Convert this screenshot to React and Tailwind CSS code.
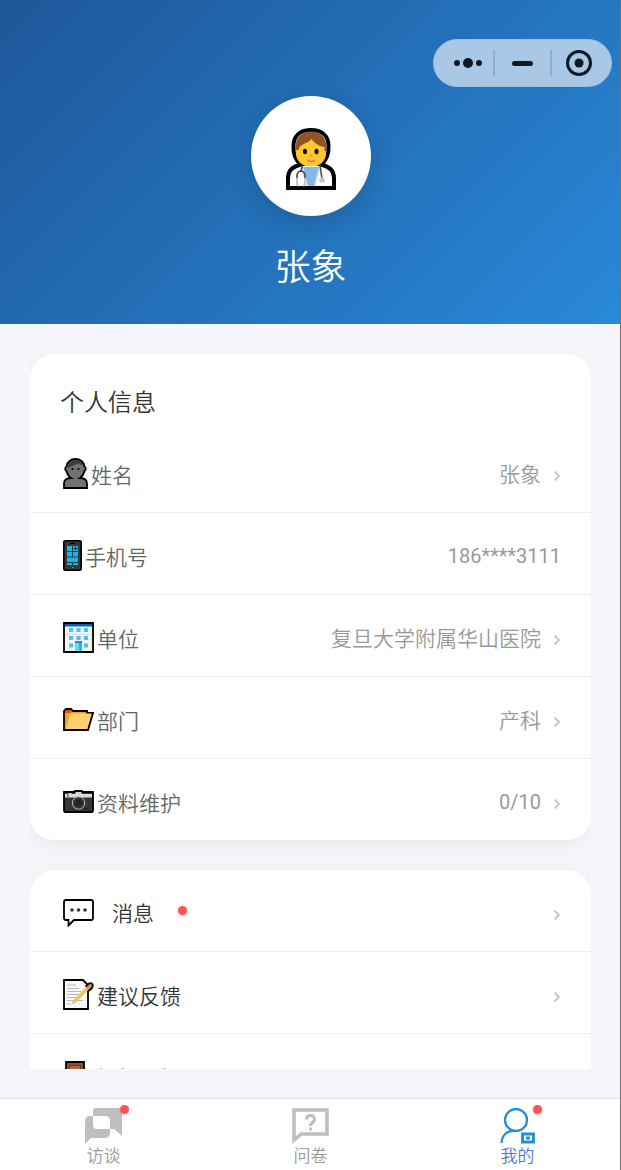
import React from 'react';

const DoctorIcon = () => (
  <svg viewBox="0 0 50 62" className="h-[62px] w-[50px]" aria-hidden="true">
    <path d="M2 60V50c0-7 4-11.500 13-13.500C9 32 7 26 7.500 17 8 7 15 2 25 2s17 5 17.500 15c.5 9-1.500 15-7.500 19.500C44 38.500 48 43 48 50v10z" fill="#fff" stroke="#000" strokeWidth="4" />
    <path d="M10 17C10 9 17 4 25 4s15 5 15 13v10c-1 7-7 11.500-15 11.500S11 34 10 27z" fill="#ffc62e" />
    <path d="M10 22V16C10.500 8 17 3.500 25 3.500S39.500 8 40 16v7h-1.500v-4c-6-1-10-4-13-8-3 4-8 4-12 8l-1 3z" fill="#8f5428" />
    <ellipse cx="19" cy="23.500" rx="2" ry="2.800" />
    <ellipse cx="30.500" cy="23.500" rx="2" ry="2.800" />
    <circle cx="25" cy="27.500" r="1.300" fill="#f79a2c" />
    <path d="M21.500 32c2 1.800 5 1.800 7 0" fill="none" stroke="#ee6c46" strokeWidth="1.500" />
    <path d="M16 39h18l-5 19h-7z" fill="#83b9e8" />
    <path d="M16 39l5 19M34 39l-5 19" stroke="#dfe8ef" strokeWidth="2" />
    <path d="M16 37c1 3-1 4-1.500 7M34 37l2 14M11 52v-5q1-4 4-4t4 4v5" fill="none" stroke="#454a50" strokeWidth="1.600" />
    <path d="M11 50v6q0 1.500 2 1.500M19 50v6q0 1.500-2 1.500" fill="none" stroke="#c9c9c9" strokeWidth="2" />
    <circle cx="36" cy="52" r="2.800" fill="#c6c6c6" />
  </svg>
);

const PersonIcon = () => (
  <svg viewBox="0 0 25 31" className="h-[31px] w-[25px]" aria-hidden="true">
    <path d="M1 30v-4c0-4 3-6 7-6-3-2-4-5-4.500-7-2-1-1.500-4 0-4.500C4 4 8 1 12.500 1S21 4 21.500 8.500c1.500.5 2 3.500 0 4.500-.5 2-1.500 5-4.500 7 4 0 7 2 7 6v4z" fill="#727272" stroke="#000" strokeWidth="1.800" />
    <path d="M5 10c0-5 4-8 7.500-8 4 0 6.500 2 7.500 5-3 0-4-1-5-2-3 3-6 2-8 4z" fill="#3d3d3d" />
    <circle cx="9.500" cy="11" r="1.100" />
    <circle cx="15.500" cy="11" r="1.100" />
  </svg>
);

const PhoneIcon = () => (
  <svg viewBox="0 0 19 31" className="h-[31px] w-[19px]" aria-hidden="true">
    <rect x=".8" y=".8" width="17.400" height="29.400" rx="1.500" fill="#373737" stroke="#000" strokeWidth="1.600" />
    <path d="M4 6h5v5H4zM10 6h2v2h-2zM13 6h2v2h-2zM10 9h2v2h-2zM13 9h2v2h-2zM4 12h5v4.500H4zM10 12h5v4.500h-5zM4 17.500h11V22H4zM4 23h5v2H4zM10 23h5v2h-5z" fill="#12b9ed" />
    <path d="M7 3.500h5" stroke="#000" />
    <circle cx="9.500" cy="27.500" r=".7" fill="#999" />
  </svg>
);

const BuildingIcon = () => (
  <svg viewBox="0 0 31 31" className="size-[31px]" aria-hidden="true">
    <path d="M1 1h29v29H1z" fill="#f1f1f1" stroke="#000" strokeWidth="1.800" />
    <path d="M2 2h27v2.500H2z" fill="#0f5fb0" />
    <path d="M2 12.500h27" stroke="#ddd" />
    <path d="M6 6h4v4H6zM13.500 6h4v4h-4zM21 6h4v4h-4zM6 14h4v4H6zM13.500 14h4v4h-4zM21 14h4v4h-4zM6 21.500h4v4H6zM21 21.500h4v4h-4z" fill="#48c5ea" />
    <path d="M12 20h7v9h-7z" fill="#55ddff" />
    <path d="M16 21h3v8h-3z" fill="#25b7e8" />
    <path d="M12 20h7" stroke="#1264b2" strokeWidth="1.500" />
  </svg>
);

const FolderIcon = () => (
  <svg viewBox="0 0 31 23" className="h-[23px] w-[31px]" aria-hidden="true">
    <path d="M1 22V3l2-2h5l2 2h14v2h6l-5 17z" fill="#f0a51c" stroke="#000" strokeWidth="1.800" />
    <path d="M2 3l2-1h4l1 2-3 1H2z" fill="#df4b17" />
    <path d="M7 5.500h21.500L24 21H3z" fill="#ffd073" />
  </svg>
);

const CameraIcon = () => (
  <svg viewBox="0 0 31 23" className="h-[23px] w-[31px]" aria-hidden="true">
    <path d="M1 2h10l1-1h7l1 1h10v19l-1 1H2l-1-1z" fill="#353535" stroke="#000" strokeWidth="1.800" />
    <path d="M2 4h3l1-1h2l1 1h3l1-2h5l1 2h10v3.500H2z" fill="#d9d9d9" />
    <path d="M4 5.500h2" stroke="#e34a42" strokeWidth="2" />
    <circle cx="15.500" cy="13" r="6.200" fill="#333" stroke="#bbb" strokeWidth="1" />
    <circle cx="15.500" cy="13" r="3.500" fill="#222" />
    <circle cx="23.500" cy="18.500" r=".8" />
  </svg>
);

const MessageIcon = () => (
  <svg viewBox="0 0 31 28" className="h-[28px] w-[31px]" aria-hidden="true">
    <path d="M3 1h25q2 0 2 2v16q0 2-2 2H11l-5.500 5.500V21H3q-2 0-2-2V3q0-2 2-2z" fill="#fff" stroke="#000" strokeWidth="1.800" />
    <circle cx="9" cy="11" r="1.800" fill="#333" />
    <circle cx="15.500" cy="11" r="1.800" fill="#333" />
    <circle cx="22" cy="11" r="1.800" fill="#333" />
  </svg>
);

const MemoIcon = () => (
  <svg viewBox="0 0 31 31" className="size-[31px]" aria-hidden="true">
    <path d="M1 1h19l5 5v24H1z" fill="#f7f7f7" stroke="#000" strokeWidth="1.800" />
    <path d="M4 6h9M4 9.500h12M4 12.500h14M4 15.500h14M4 18.500h12M4 21.500h16M4 25h4" stroke="#b9b9b9" />
    <path d="M27.500 6L11 23" stroke="#f5c452" strokeWidth="3.500" />
    <path d="M8.500 25.500l1.500-4 2.500 2.500z" fill="#eac28c" />
    <path d="M22.500 7.500L26 4.500q2.500-1 3.500 1t-1.500 4.500L25.500 12" fill="#d78c83" stroke="#000" strokeWidth="1.800" />
  </svg>
);

const DoorIcon = () => (
  <svg viewBox="0 0 25 31" className="h-[31px] w-[25px]" aria-hidden="true">
    <path d="M3 1h18v29H3z" fill="#8d5432" stroke="#000" strokeWidth="1.800" />
    <path d="M6.500 4.500h11v9h-11zM6.500 17h11v9h-11z" fill="#a9683f" stroke="#63351d" />
  </svg>
);

const TalkIcon = () => (
  <svg viewBox="0 0 38 36" className="h-9 w-[38px]" aria-hidden="true">
    <path fillRule="evenodd" d="M11 0h26v28l-8-7H12q-4 0-4-4V3q0-3 3-3zM5 8h15q5 0 5 5v12q0 5-5 5H6l-6 6V13q0-5 5-5z" fill="#bfbfbf" />
  </svg>
);

const SurveyIcon = () => (
  <svg viewBox="0 0 37 36" className="h-9 w-[37px]" aria-hidden="true">
    <path d="M2 2h33v24H9l-7 6z" fill="none" stroke="#bfbfbf" strokeWidth="3.600" />
    <path d="M14.500 11.500q0-4 4-4t4 4c0 3-4 3-4 6.500" fill="none" stroke="#bfbfbf" strokeWidth="3.200" />
    <path d="M17 19.500h3v3h-3z" fill="#bfbfbf" />
  </svg>
);

const MineIcon = () => (
  <svg viewBox="0 0 36 36" className="size-9" aria-hidden="true">
    <g fill="none" stroke="#2191d0" strokeWidth="2.300">
      <circle cx="16" cy="12" r="11" />
      <path d="M1.500 35C2 27 7 23 13 23" />
      <path d="M22.500 26h11v8h-11z" strokeWidth="2.800" />
    </g>
    <path d="M26 28.500h4v3h-4z" fill="#2191d0" />
  </svg>
);

const Chevron = () => (
  <svg viewBox="0 0 8 10" className="mt-1 ml-3 h-2.5 w-2" aria-hidden="true">
    <path d="M1.500 .5L6 5 1.500 9.500" fill="none" stroke="#c4c4c4" strokeWidth="1.800" />
  </svg>
);

const Dot = ({ className }) => (
  <span className={`size-[9px] rounded-full bg-[#fb5650] shadow-[0_1px_3px_rgba(255,77,79,0.4)] ${className}`} />
);

const profileRows = [
  { icon: PersonIcon, label: '姓名', value: '张象', arrow: true },
  { icon: PhoneIcon, label: '手机号', value: '186****3111', numeric: true },
  { icon: BuildingIcon, label: '单位', value: '复旦大学附属华山医院', arrow: true },
  { icon: FolderIcon, label: '部门', value: '产科', arrow: true },
  { icon: CameraIcon, label: '资料维护', value: '0/10', numeric: true, arrow: true },
];

const menuRows = [
  { icon: MessageIcon, label: '消息', arrow: true, dot: true },
  { icon: MemoIcon, label: '建议反馈', arrow: true },
  { icon: DoorIcon, label: '安全退出', arrow: true },
];

const tabs = [
  { icon: TalkIcon, label: '访谈', dot: true },
  { icon: SurveyIcon, label: '问卷' },
  { icon: MineIcon, label: '我的', dot: true, active: true },
];

const Row = ({ icon: Icon, label, value, numeric, arrow, dot, labelColor }) => (
  <button
    type="button"
    className="flex h-[82px] w-full items-center border-b border-[#ededed] px-[30px] pt-1 text-left last:h-[81px] last:border-b-0"
  >
    <span className="ml-[3px] flex shrink-0 items-center">
      <Icon />
    </span>
    <span className={`text-[21px] leading-8 font-[350] ${dot ? 'ml-[18px]' : 'ml-[3px] pt-0.5'} ${labelColor}`}>
      {label}
    </span>
    {dot && <Dot className="mb-1 ml-6" />}
    <span
      className={`ml-auto leading-8 text-[#999] ${numeric ? "font-['Roboto',sans-serif] text-xl" : 'text-[21px] font-[350]'}`}
    >
      {value}
    </span>
    {arrow && <Chevron />}
  </button>
);

const App = () => (
  <div className="relative flex h-screen flex-col bg-[#f5f6fa] font-['Noto_Sans','Noto_Sans_CJK_SC',sans-serif]">
    <header className="flex shrink-0 flex-col items-center bg-linear-135 from-[#1e5799] to-[#2989d8] pt-[39px] pb-[29px]">
      <div className="mr-[9px] flex h-12 items-center self-end rounded-full border border-[#9bc0e3] bg-[#a8c8e6] text-[#101820]">
        <button type="button" aria-label="更多" className="flex h-[26px] w-[59px] items-center justify-center pl-2">
          <svg viewBox="0 0 28 10" className="h-2.5 w-7" fill="currentColor" aria-hidden="true">
            <circle cx="3" cy="5" r="3" />
            <circle cx="14" cy="5" r="5" />
            <circle cx="25" cy="5" r="3" />
          </svg>
        </button>
        <button type="button" aria-label="最小化" className="flex h-[26px] w-[59px] items-center justify-center border-x-2 border-[#8db0d0]">
          <span className="h-[5px] w-[21px] rounded-full bg-current" />
        </button>
        <button type="button" aria-label="关闭" className="flex h-[26px] w-[59px] items-center justify-center pr-1.5">
          <svg viewBox="0 0 26 26" className="size-[26px]" aria-hidden="true">
            <circle cx="13" cy="13" r="11.500" fill="none" stroke="currentColor" strokeWidth="3" />
            <circle cx="13" cy="13" r="4.500" fill="currentColor" />
          </svg>
        </button>
      </div>
      <div className="mt-[9px] flex size-[120px] items-center justify-center rounded-full bg-white pt-1.5 shadow-[0_8px_24px_rgba(0,0,0,0.15)]">
        <DoctorIcon />
      </div>
      <h1 className="mt-[23px] text-4xl leading-14 font-[350] text-white">张象</h1>
    </header>

    <main className="mx-[30px] mt-[30px] mb-[29px] min-h-0 flex-1 overflow-hidden">
      <section className="rounded-3xl bg-white shadow-[0_4px_20px_rgba(0,0,0,0.06)]">
        <h2 className="px-[30px] pt-[30px] pb-[11px] text-2xl leading-9 font-[350] text-[#333]">个人信息</h2>
        {profileRows.map((row) => (
          <Row key={row.label} {...row} labelColor="text-[#666]" />
        ))}
      </section>
      <section className="mt-[30px] rounded-3xl bg-white shadow-[0_4px_20px_rgba(0,0,0,0.06)]">
        {menuRows.map((row) => (
          <Row key={row.label} {...row} labelColor="text-[#333]" />
        ))}
      </section>
    </main>

    <nav className="grid h-[72px] shrink-0 grid-cols-3 border-t border-[#dfe0e4] bg-white">
      {tabs.map(({ icon: Icon, label, dot, active }) => (
        <a key={label} href="#" className="flex flex-col items-center pt-[9px]">
          <span className="relative">
            <Icon />
            {dot && <Dot className="absolute -top-[3px] -right-1.5" />}
          </span>
          <span className={`text-[17px] leading-6 font-[350] ${active ? 'text-[#5874c9]' : 'text-[#999]'}`}>
            {label}
          </span>
        </a>
      ))}
    </nav>

    {/* window edge */}
    <div className="pointer-events-none absolute inset-y-0 right-0 w-px bg-[#6f7174]" />
  </div>
);

export default App;
